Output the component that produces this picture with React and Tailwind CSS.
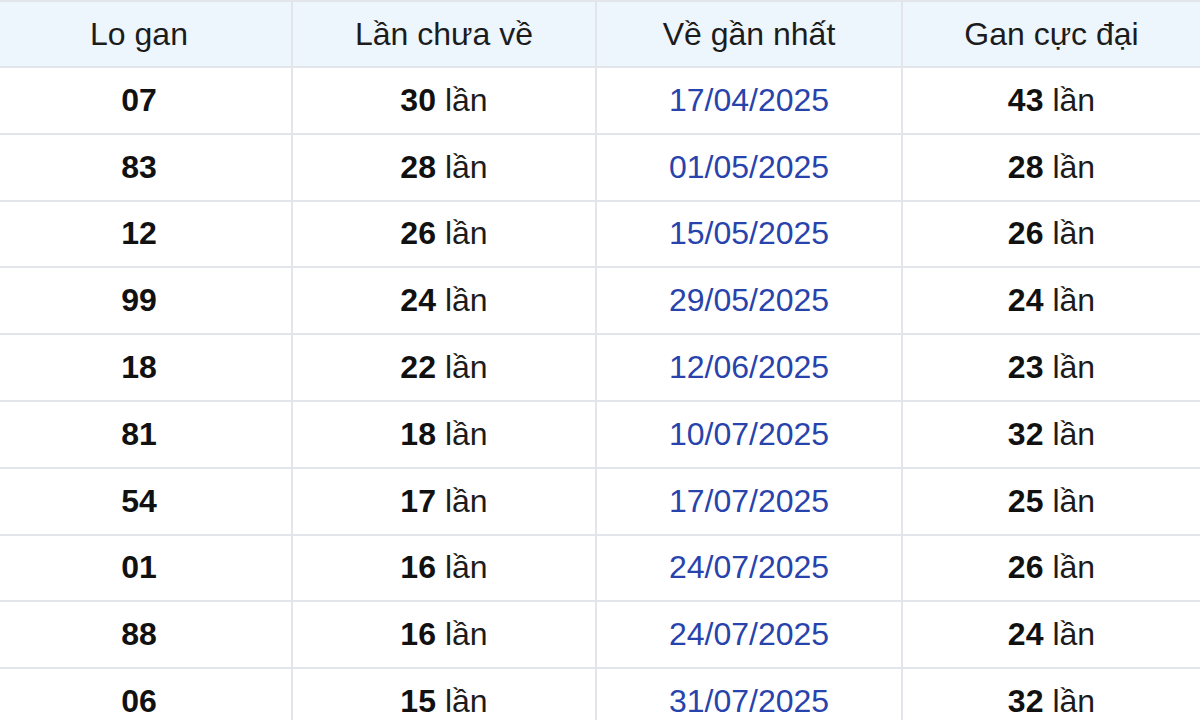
const rows = [
  ["07", 30, "17/04/2025", 43],
  ["83", 28, "01/05/2025", 28],
  ["12", 26, "15/05/2025", 26],
  ["99", 24, "29/05/2025", 24],
  ["18", 22, "12/06/2025", 23],
  ["81", 18, "10/07/2025", 32],
  ["54", 17, "17/07/2025", 25],
  ["01", 16, "24/07/2025", 26],
  ["88", 16, "24/07/2025", 24],
  ["06", 15, "31/07/2025", 32],
];

const cell = "flex items-center justify-center pb-[1px] border-r-2 border-[#e2e5ea] last:border-r-0";

export default function App() {
  return (
    <div className="w-[1200px] h-[720px] overflow-hidden bg-white text-[32px] text-[#1c1c1c] font-['Liberation_Sans',Arial,sans-serif]">
      {/* header */}
      <div className="grid grid-cols-[293px_304px_306px_297px] h-[68px] bg-[#eef6fd] border-t-2 border-b-2 border-[#e2e5ea]">
        <div className={cell + " pr-[13px]"}>Lo gan</div>
        <div className={cell}>Lần chưa về</div>
        <div className={cell}>Về gần nhất</div>
        <div className={cell}>Gan cực đại</div>
      </div>

      {rows.map(([num, miss, date, max]) => (
        <div
          key={num + date}
          className="grid grid-cols-[293px_304px_306px_297px] h-[66.8px] border-b-2 border-[#e2e5ea]"
        >
          <div className={cell + " pr-[13px] font-bold text-[#111]"}>{num}</div>
          <div className={cell}>
            <span className="font-bold text-[#111]">{miss}</span>
            <span className="ml-[9px]">lần</span>
          </div>
          <div className={cell + " text-[#2843ab]"}>{date}</div>
          <div className={cell}>
            <span className="font-bold text-[#111]">{max}</span>
            <span className="ml-[9px]">lần</span>
          </div>
        </div>
      ))}
    </div>
  );
}
